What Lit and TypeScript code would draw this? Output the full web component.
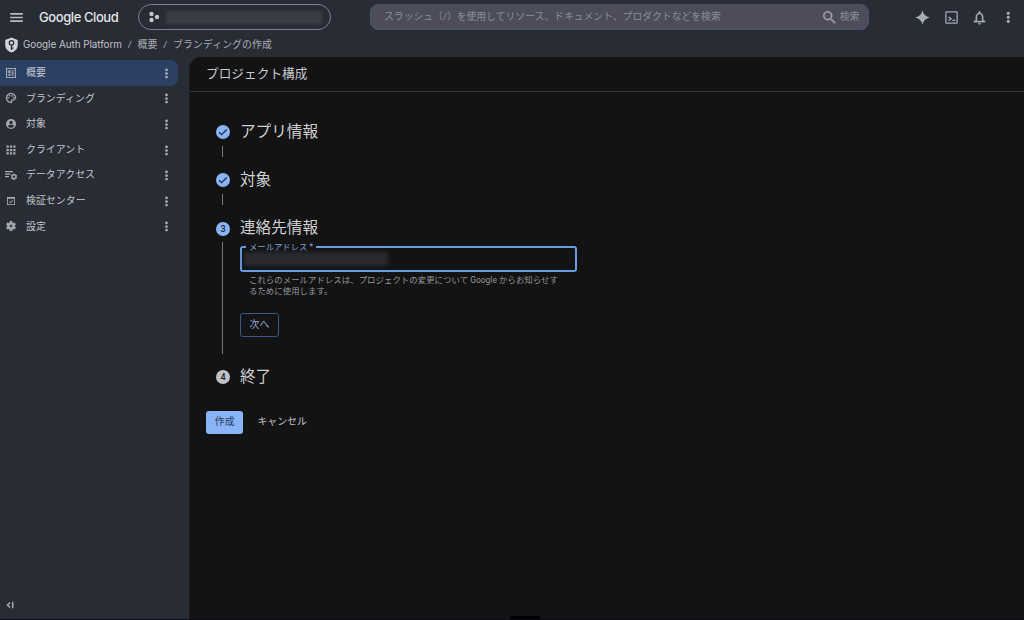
import { LitElement, html, css, svg } from "lit";
import { customElement, property } from "lit/decorators.js";

const glyphs: Record<string, unknown> = {
  menu: svg`<path d="M3 18.200h18v-2.400H3v2.400zm0-5h18v-2.400H3v2.400zm0-7.400v2.400h18V5.800H3z"/>`,
  search: svg`<path stroke="currentColor" stroke-width=".4" d="M15.5 14h-.79l-.28-.27A6.47 6.47 0 0 0 16 9.5 6.5 6.5 0 1 0 9.5 16c1.61 0 3.09-.59 4.23-1.57l.27.28v.79l5 4.99L20.49 19l-4.99-5zm-6 0a4.5 4.5 0 1 1 0-9 4.5 4.5 0 0 1 0 9z"/>`,
  project: svg`<circle cx="7" cy="6" r="4.400"/><circle cx="7" cy="18" r="4.400"/><circle cx="18" cy="12" r="4.400"/>`,
  shield: svg`<path d="M12 0 2 4v8c0 5.600 4.200 10.400 10 12 5.800-1.600 10-6.400 10-12V4z"/><path fill="none" stroke="#282c34" stroke-width="2" d="M12 12v8M12 17h3"/><circle cx="12" cy="8.500" r="3.600" fill="none" stroke="#282c34" stroke-width="2"/>`,
  spark: svg`<path d="M12 .5c1.300 6.400 5.100 10.200 11.500 11.500-6.400 1.300-10.200 5.100-11.500 11.500C10.700 17.100 6.900 13.300.5 12 6.900 10.700 10.700 6.900 12 .5z"/>`,
  shell: svg`<path d="M20 2H4a2 2 0 0 0-2 2v16c0 1.100.9 2 2 2h16a2 2 0 0 0 2-2V4a2 2 0 0 0-2-2zm0 18H4V4h16v16z"/><path d="M7.200 10v2.300l2.800 1.700-2.800 1.700V18l5.300-3.200v-1.600zM13.500 15.700h4.500v2h-4.500z"/>`,
  bell: svg`<path stroke="currentColor" stroke-width=".5" d="M12 23c1.100 0 2-.9 2-2h-4a2 2 0 0 0 2 2zm6-6.500V11c0-3.070-1.630-5.640-4.500-6.320V3.500a1.500 1.500 0 0 0-3 0v1.180C7.640 5.360 6 7.920 6 11v5.500l-3 1V19.500h18v-2l-3-1zm-2 1H8V11c0-2.480 1.510-4.500 4-4.500s4 2.020 4 4.500v6.500z"/>`,
  more: svg`<circle cx="12" cy="4.200" r="3"/><circle cx="12" cy="12" r="3"/><circle cx="12" cy="19.800" r="3"/>`,
  overview: svg`<path d="M2 2v20h20V2H2zm17.800 17.800H4.200V4.200h15.600v15.600z"/><path d="M6.500 6.500H11V12H6.500zM6.500 13.500H11v4H6.500zM13 6.500h4.500V9H13zM13 10.500h4.500v3H13zM13 15h4.500v2.500H13z"/>`,
  palette: svg`<path stroke="currentColor" stroke-width=".6" d="M12 22C6.490 22 2 17.510 2 12S6.490 2 12 2s10 4.040 10 9c0 3.310-2.690 6-6 6h-1.770c-.28 0-.5.22-.5.5 0 .12.050.23.130.33.410.47.640 1.060.640 1.670A2.500 2.500 0 0 1 12 22zm0-18c-4.410 0-8 3.590-8 8s3.590 8 8 8c.28 0 .5-.22.5-.5a.54.54 0 0 0-.14-.35c-.41-.46-.63-1.050-.63-1.650a2.500 2.500 0 0 1 2.500-2.500H16c2.210 0 4-1.790 4-4 0-3.860-3.590-7-8-7z"/><circle cx="6.500" cy="11.500" r="1.700"/><circle cx="9.500" cy="7.500" r="1.700"/><circle cx="14.500" cy="7.500" r="1.700"/><circle cx="17.500" cy="11.500" r="1.700"/>`,
  person: svg`<path d="M12 2a10 10 0 1 0 0 20 10 10 0 0 0 0-20zm0 3.500a3.500 3.500 0 1 1 0 7 3.500 3.500 0 0 1 0-7zM12 19.500c-2.500 0-4.710-1.280-6-3.220.03-1.990 4-2.580 6-2.580s5.970.59 6 2.580a7.200 7.200 0 0 1-6 3.220z"/>`,
  apps: svg`<path d="M3 3h4.500v4.500H3zM9.750 3h4.500v4.500h-4.500zM16.500 3H21v4.500h-4.500zM3 9.750h4.500v4.500H3zM9.750 9.750h4.500v4.500h-4.500zM16.500 9.750H21v4.500h-4.500zM3 16.500h4.500V21H3zM9.750 16.500h4.500V21h-4.500zM16.500 16.500H21V21h-4.500z"/>`,
  data: svg`<path d="M0 4h16v2.400H0zM0 9h11v2.400H0zM0 14h8v2.400H0z"/><circle cx="18" cy="15.500" r="4" fill="none" stroke="currentColor" stroke-width="2.800"/><path d="M16.800 9h2.400v2.500h-2.400zM16.800 19.500h2.400V22h-2.400zM11.800 12.600l1-1.700 2.200 1.300-1 1.700zM21 17.800l1-1.700 2.200 1.300-1 1.700zM11.800 18.400l2.200-1.300 1 1.700-2.200 1.300zM21 13.200l2.200-1.300 1 1.700-2.200 1.300z"/>`,
  verify: svg`<path d="M4 4v16h16V4H4zm14.300 14.300H5.700V7.500h12.600v10.800z"/><path d="m10.800 16.500-3-3 1.200-1.200 1.800 1.800 4-4 1.200 1.200z"/>`,
  gear: svg`<path stroke="currentColor" stroke-width=".8" d="M19.140 12.940c.04-.3.060-.61.060-.94s-.02-.64-.07-.94l2.030-1.580a.49.49 0 0 0 .12-.61l-1.920-3.320a.49.49 0 0 0-.59-.22l-2.390.96a7 7 0 0 0-1.620-.94l-.36-2.540A.48.48 0 0 0 13.920 2.400h-3.840a.48.48 0 0 0-.47.410l-.36 2.540c-.59.24-1.130.57-1.620.94l-2.390-.96a.48.48 0 0 0-.59.22L2.740 8.870a.48.48 0 0 0 .12.610l2.030 1.580a6 6 0 0 0 0 1.880l-2.030 1.580a.49.49 0 0 0-.12.610l1.920 3.320c.12.22.37.29.59.22l2.390-.96c.5.380 1.030.7 1.620.94l.36 2.540c.05.24.24.410.48.410h3.840c.24 0 .44-.17.470-.41l.36-2.540a7 7 0 0 0 1.620-.94l2.390.96c.22.080.47 0 .59-.22l1.920-3.320a.48.48 0 0 0-.12-.61zM12 15a3 3 0 1 1 0-6 3 3 0 0 1 0 6z"/>`,
  collapse: svg`<path fill="none" stroke="currentColor" stroke-width="3.600" d="m12 6-6 6 6 6M18.500 4v16"/>`,
  check: svg`<path fill="none" stroke="#1c2a44" stroke-width="3" d="m2.500 12.500 6 5.800L21 6"/>`,
};

@customElement("ui-icon")
class UiIcon extends LitElement {
  @property() name = "";
  static styles = css`
    :host { display: block; flex: none; width: 14px; height: 14px; }
    .glyph { display: block; width: 100%; height: 100%; fill: currentColor; overflow: visible; }
  `;
  render() {
    return html`<svg class="glyph" viewBox="0 0 24 24">${glyphs[this.name]}</svg>`;
  }
}

const nav = [
  ["overview", "概要"],
  ["palette", "ブランディング"],
  ["person", "対象"],
  ["apps", "クライアント"],
  ["data", "データアクセス"],
  ["verify", "検証センター"],
  ["gear", "設定"],
];

@customElement("app-root")
class AppRoot extends LitElement {
  static styles = css`
    :host {
      display: flex; flex-direction: column; box-sizing: border-box;
      width: 1024px; height: 620px; overflow: hidden;
      background: #282c34; border-bottom: 1.500px solid #100818; color: #c6c9cf;
      font: 9.900px/14px Roboto, "Noto Sans CJK JP", sans-serif; white-space: nowrap;
    }
    * { box-sizing: border-box; }
    .top { display: flex; align-items: center; height: 34px; flex: none; padding-left: 7.500px; color: #b4b9c3; }
    .burger { width: 17px; height: 17px; }
    .brand { margin-left: 14.500px; width: 99px; font: 500 13px/20px Inter, sans-serif; letter-spacing: -.42px; color: #e2e4e8; }
    .picker { display: flex; align-items: center; width: 193px; height: 26px; border: 1px solid #7b7e99; border-radius: 13px; padding-left: 8.500px; gap: 6px; color: #c3c7d0; }
    .dots { width: 12px; height: 12px; }
    .hidden-name { width: 156px; height: 13px; border-radius: 2px; background: #3a3e47; filter: blur(1.500px); }
    .search { display: flex; align-items: center; width: 499px; height: 26px; margin-left: 39px; padding: 0 8.500px 0 13px; border: 1px solid #445274; border-radius: 8px; background: #4c4d59; color: #8b8e9a; }
    .query { flex: 1; font-size: 9.820px; }
    .lens { width: 17px; height: 17px; margin-right: 2px; color: #9fa3ad; }
    .tools { display: flex; align-items: center; gap: 13.500px; margin-left: 46px; color: #a6adb9; }
    .tool { width: 15px; height: 15px; }
    .kebab { width: 12.500px; height: 12.500px; margin-left: 1px; }
    .crumbs { display: flex; align-items: center; height: 23px; flex: none; padding: 0 0 2px 4px; color: #a9adb5; }
    .shield { width: 15px; height: 16px; color: #cfd2d6; }
    .platform { margin-left: 4px; padding-bottom: 1px; width: 99px; font-family: Inter, sans-serif; font-size: 9.900px; letter-spacing: -.04px; color: #c0c3c9; }
    .slash { width: 15.500px; text-align: center; }
    .trail { letter-spacing: .1px; }
    .body { display: flex; flex: 1; min-height: 0; }
    .side { display: flex; flex-direction: column; width: 189px; padding-top: 3px; flex: none; }
    .item { display: flex; align-items: center; width: 177.500px; height: 25.600px; padding: 0 6px 0 5.400px; border-radius: 0 8px 8px 0; color: #c3c7ce; }
    .active { background: #2b4063; }
    .mark { width: 12px; height: 12px; color: #a5abb6; }
    .label { flex: 1; margin-left: 8.600px; padding-top: .6px; letter-spacing: .06px; }
    .dot3 { width: 11px; height: 11px; margin-top: 1px; color: #a5abb6; }
    .fold { width: 10px; height: 10px; margin: auto 0 9px 5px; color: #a5abb6; }
    .main { display: flex; flex-direction: column; flex: 1; background: #131313; border-radius: 12px 0 0 0; border-left: 1px solid #1c1d20; }
    .title { height: 35px; flex: none; padding: 8px 0 0 16px; font-size: 12.700px; line-height: 18px; border-bottom: 1px solid #34363a; color: #c9cbce; }
    .steps { display: flex; flex-direction: column; padding: 28px 0 0 26px; }
    .step { display: grid; grid-template-columns: 14px 1fr; column-gap: 10px; height: 48.300px; }
    .contact { height: 148.500px; }
    .last { height: 45.900px; }
    .rail { display: flex; flex-direction: column; align-items: center; padding-top: 5px; gap: 7px; }
    .badge { display: flex; align-items: center; justify-content: center; width: 14px; height: 14px; flex: none; border-radius: 50%; background: #8ab4f8; color: #1b2436; font-weight: 500; font-size: 9px; }
    .idle { background: #bfc1c4; color: #202124; }
    .tick { width: 10px; height: 10px; }
    .line { width: 1px; height: 11px; margin-right: 1px; background: #77797d; }
    .tall { height: 112px; margin-top: -1px; }
    .name { padding-top: .7px; font-size: 15.600px; line-height: 22px; color: #cfd0d2; }
    .field { display: flex; position: relative; width: 337px; height: 26px; margin-top: 7px; padding: 4px 2px; border: 2px solid #6d9ae4; border-radius: 3px; }
    .legend { position: absolute; left: 4px; top: -7.500px; padding: 0 3px; background: #131313; color: #7ea3df; font-size: 8.350px; line-height: 12px; }
    .secret { width: 144px; height: 14px; background: #292b30; filter: blur(2px); }
    .hint { padding: 2.600px 0 0 9px; font-size: 8.420px; line-height: 11px; color: #94979b; letter-spacing: .03px; }
    .next { display: flex; align-items: center; justify-content: center; width: 39px; height: 24px; margin-top: 16.400px; border: 1px solid #395886; border-radius: 3px; color: #8da9d8; }
    .actions { display: flex; align-items: center; gap: 14px; padding: 0 0 0 16px; }
    .create { display: flex; align-items: center; justify-content: center; width: 37.400px; height: 23px; border-radius: 3px; background: #8ab4f8; color: #283b5c; }
    .cancel { color: #c4c6c9; }
    .handle { width: 30px; height: 3px; margin: auto 0 0 320px; background: #000; }
  `;

  render() {
    return html`
      <header class="top">
        <ui-icon class="burger" name="menu"></ui-icon>
        <div class="brand">Google Cloud</div>
        <div class="picker"><ui-icon class="dots" name="project"></ui-icon><div class="hidden-name"></div></div>
        <div class="search">
          <div class="query">スラッシュ（/）を使用してリソース、ドキュメント、プロダクトなどを検索</div>
          <ui-icon class="lens" name="search"></ui-icon><span>検索</span>
        </div>
        <div class="tools">
          <ui-icon class="tool" name="spark"></ui-icon>
          <ui-icon class="tool" name="shell"></ui-icon>
          <ui-icon class="tool" name="bell"></ui-icon>
          <ui-icon class="kebab" name="more"></ui-icon>
        </div>
      </header>
      <nav class="crumbs">
        <ui-icon class="shield" name="shield"></ui-icon>
        <span class="platform">Google Auth Platform</span><span class="slash">/</span>
        <span class="trail">概要</span><span class="slash">/</span><span class="trail">ブランディングの作成</span>
      </nav>
      <div class="body">
        <aside class="side">
          ${nav.map(([icon, label], i) => html`
            <div class="item ${i === 0 ? "active" : ""}">
              <ui-icon class="mark" name=${icon}></ui-icon>
              <span class="label">${label}</span>
              <ui-icon class="dot3" name="more"></ui-icon>
            </div>`)}
          <ui-icon class="fold" name="collapse"></ui-icon>
        </aside>
        <main class="main">
          <div class="title">プロジェクト構成</div>
          <div class="steps">
            ${["アプリ情報", "対象"].map((t) => html`
              <section class="step">
                <div class="rail"><div class="badge"><ui-icon class="tick" name="check"></ui-icon></div><div class="line"></div></div>
                <div class="name">${t}</div>
              </section>`)}
            <section class="step contact">
              <div class="rail"><div class="badge">3</div><div class="line tall"></div></div>
              <div>
                <div class="name">連絡先情報</div>
                <div class="field"><span class="legend">メールアドレス *</span><div class="secret"></div></div>
                <div class="hint">これらのメールアドレスは、プロジェクトの変更について Google からお知らせす<br>るために使用します。</div>
                <div class="next">次へ</div>
              </div>
            </section>
            <section class="step last">
              <div class="rail"><div class="badge idle">4</div></div>
              <div class="name">終了</div>
            </section>
          </div>
          <div class="actions"><div class="create">作成</div><div class="cancel">キャンセル</div></div>
          <div class="handle"></div>
        </main>
      </div>
    `;
  }
}
